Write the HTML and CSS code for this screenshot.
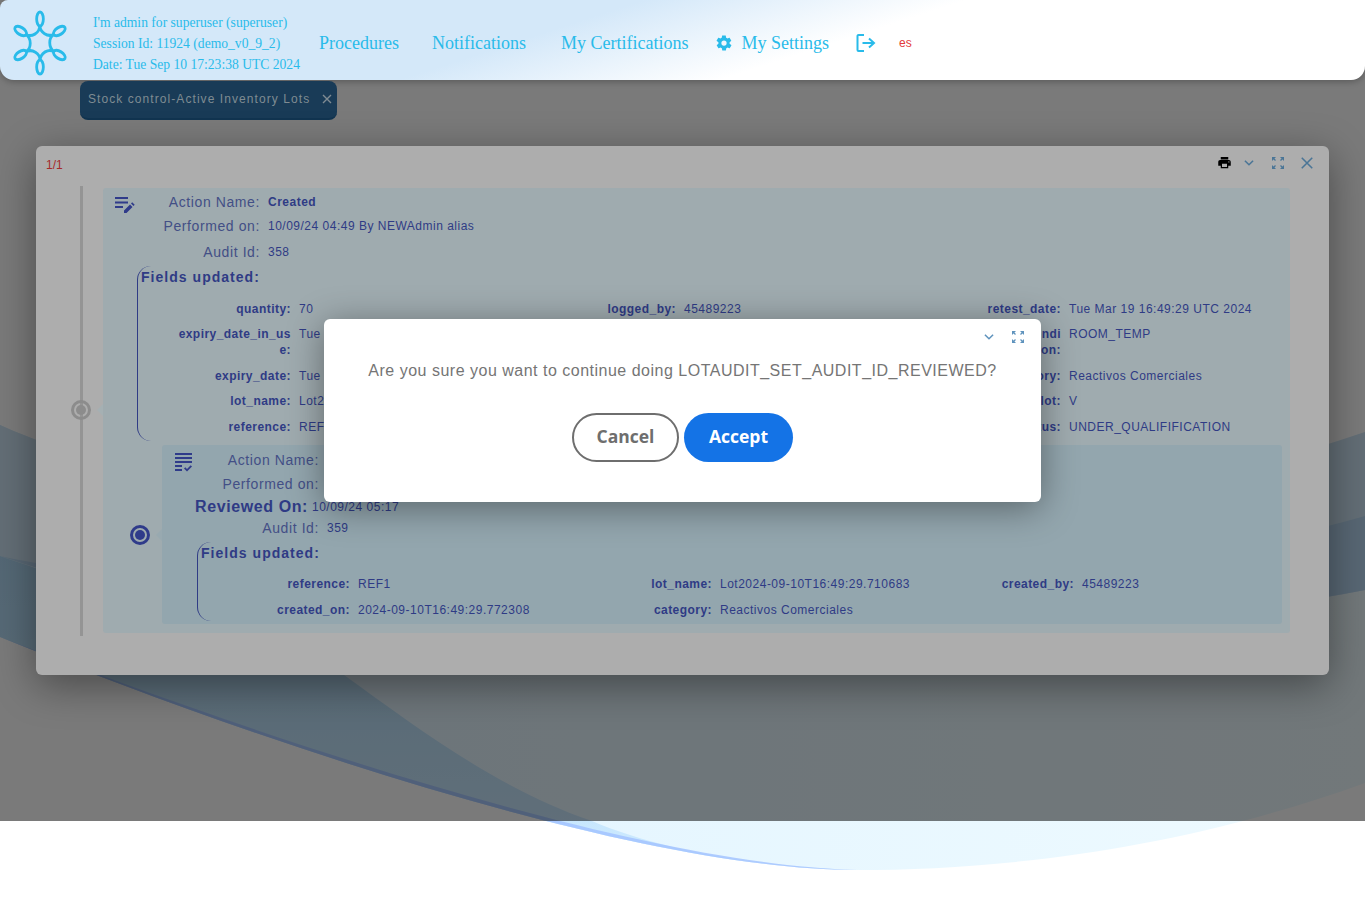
FILE: index.html
```html
<!DOCTYPE html>
<html lang="en">

<head>
    <meta charset="UTF-8">
    <meta name="viewport" content="width=device-width, initial-scale=1.0">
    <title>Stock control - Active Inventory Lots</title>
    <link rel="stylesheet" href="styles.css">
</head>

<body>
    <svg class="backdrop" viewBox="0 0 1365 901" aria-hidden="true">
        <defs>
            <linearGradient id="base" x1="0" y1="0" x2="1" y2="0">
                <stop offset="0" stop-color="#dff3ff" />
                <stop offset="1" stop-color="#eefaff" />
            </linearGradient>
            <linearGradient id="wedge" x1="0" y1="0" x2="0" y2="1">
                <stop offset="0" stop-color="#aed8f4" />
                <stop offset="1" stop-color="#cdeaff" />
            </linearGradient>
        </defs>
        <path fill="url(#base)"
            d="M0 425C300 560 1000 560 1365 432V783C1180 850 1000 870 857 870C640 870 261 743 0 637Z" />
        <path fill="#cfe6f6" d="M0 425C300 560 1000 560 1365 432V590C1000 660 300 660 0 556Z" />
        <path fill="#b8d8f2" d="M0 556C300 660 1000 660 1365 590V516C1000 620 300 620 0 556Z" />
        <path fill="url(#wedge)"
            d="M0 556C100 590 250 640 344 675C420 730 500 790 592 821C660 850 760 868 857 870C640 870 261 743 0 637Z" />
        <path fill="#a0c0ff" fill-opacity="0.8" d="M857 870C640 870 261 743 0 637C261 738 640 865 857 870Z" />
    </svg>
    <div class="scrim"></div>

    <div class="page">
        <header class="topbar">
            <svg class="logo" viewBox="-3 0 86 86" preserveAspectRatio="none" aria-hidden="true">
                <g id="petal" fill="none" stroke="#29bbea" stroke-width="3">
                    <ellipse cx="40" cy="19" rx="3.6" ry="7" />
                    <path d="M40 26C40 32 48 38 55.6 34" />
                </g>
                <use href="#petal" transform="rotate(60 40 43)" />
                <use href="#petal" transform="rotate(120 40 43)" />
                <use href="#petal" transform="rotate(180 40 43)" />
                <use href="#petal" transform="rotate(240 40 43)" />
                <use href="#petal" transform="rotate(300 40 43)" />
            </svg>
            <div class="session">
                <div>I'm admin for superuser (superuser)</div>
                <div>Session Id: 11924 (demo_v0_9_2)</div>
                <div>Date: Tue Sep 10 17:23:38 UTC 2024</div>
            </div>
            <nav class="nav">
                <a class="nav-procedures">Procedures</a>
                <a class="nav-notifications">Notifications</a>
                <a class="nav-certifications">My Certifications</a>
                <a class="nav-settings">
                    <svg viewBox="0 0 24 24" class="gear" aria-hidden="true">
                        <path fill="#29bbea"
                            d="M19.4 13c.1-.3.1-.7.1-1s0-.7-.1-1l2.100-1.600c.2-.2.2-.4.1-.6l-2-3.500c-.1-.2-.4-.3-.6-.2l-2.500 1c-.5-.4-1.100-.7-1.700-1l-.4-2.700c0-.2-.2-.4-.5-.4h-4c-.2 0-.5.2-.5.4l-.4 2.700c-.6.2-1.100.6-1.700 1l-2.500-1c-.2-.1-.5 0-.6.2l-2 3.500c-.1.2-.1.5.1.6L4.600 11c0 .3-.1.7-.1 1s0 .7.1 1l-2.100 1.600c-.2.2-.2.4-.1.6l2 3.500c.1.2.4.3.6.2l2.500-1c.5.4 1.100.7 1.700 1l.4 2.700c0 .2.2.4.5.4h4c.2 0 .5-.2.5-.4l.4-2.700c.6-.2 1.100-.6 1.700-1l2.500 1c.2.1.5 0 .6-.2l2-3.500c.1-.2.1-.5-.1-.6L19.400 13zM12 15.500a3.500 3.500 0 1 1 0-7 3.500 3.500 0 0 1 0 7z" />
                    </svg>
                    My Settings
                </a>
                <svg class="logout" viewBox="0 0 20 20" aria-hidden="true">
                    <path fill="none" stroke="#29bbea" stroke-width="2"
                        d="M8 2H2.500a1 1 0 0 0-1 1v14a1 1 0 0 0 1 1H8M6.500 10H18M13 5.500l5 4.500-5 4.500" />
                </svg>
                <span class="lang">es</span>
            </nav>
        </header>

        <div class="tab">
            <span>Stock control-Active Inventory Lots</span>
            <svg viewBox="0 0 10 10" class="tab-close" aria-hidden="true">
                <path d="M1 1l8 8M9 1L1 9" />
            </svg>
        </div>

        <section class="card">
            <div class="card-head">
                <span class="pager">1/1</span>
                <div class="card-tools">
                    <svg class="tool tool-print" viewBox="0 0 24 24" aria-hidden="true">
                        <path fill="#000"
                            d="M19 8H5c-1.700 0-3 1.300-3 3v6h4v4h12v-4h4v-6c0-1.700-1.300-3-3-3zm-3 11H8v-5h8v5zm3-7c-.6 0-1-.4-1-1s.4-1 1-1 1 .4 1 1-.4 1-1 1zM18 3H6v4h12V3z" />
                    </svg>
                    <svg class="tool tool-line" viewBox="0 0 12 12" aria-hidden="true">
                        <path d="M2.500 4l3.500 3.500 3.500-3.500" />
                    </svg>
                    <svg class="tool tool-line" viewBox="0 0 14 14" aria-hidden="true">
                        <path class="arrows" d="M1.500 1.500l3 3M12.500 1.500l-3 3M1.500 12.500l3-3M12.500 12.500l-3-3" />
                        <path class="arrow-heads" d="M1 1h4L1 5zM13 1H9l4 4zM1 13h4l-4-4zM13 13H9l4-4z" />
                    </svg>
                    <svg class="tool tool-line" viewBox="0 0 12 12" aria-hidden="true">
                        <path d="M1.500 1.500l9 9M10.500 1.500l-9 9" />
                    </svg>
                </div>
            </div>

            <div class="timeline">
                <span class="dot dot-first"></span>
                <article class="event event-outer">
                    <div class="event-head">
                        <svg class="event-icon" viewBox="0 0 20 18" aria-hidden="true">
                            <path d="M0 1h13v2H0zM0 5.500h13v2H0zM0 10h8v2H0z" />
                            <path d="M9 14.500l6-6 2.500 2.500-6 6H9zM16 7.500l1.200-1.200 2.500 2.500-1.200 1.200z" />
                        </svg>
                        <div class="rows">
                            <div class="row"><span class="row-label">Action Name:</span><span
                                    class="row-value strong">Created</span></div>
                            <div class="row"><span class="row-label">Performed on:</span><span
                                    class="row-value">10/09/24 04:49 By NEWAdmin alias</span></div>
                            <div class="row row-audit"><span class="row-label">Audit Id:</span><span
                                    class="row-value">358</span></div>
                        </div>
                    </div>
                    <div class="fields">
                        <div class="fields-title">Fields updated:</div>
                        <div class="fields-grid">
                            <div class="field"><span class="field-label">quantity:</span><span class="field-value">70</span></div>
                            <div class="field"><span class="field-label">logged_by:</span><span class="field-value">45489223</span></div>
                            <div class="field"><span class="field-label">retest_date:</span><span class="field-value">Tue Mar 19 16:49:29 UTC 2024</span></div>
                            <div class="field"><span class="field-label">expiry_date_in_use:</span><span class="field-value">Tue Sep 10 16:49:29</span></div>
                            <div class="field"></div>
                            <div class="field"><span class="field-label">lab_storage_condition:</span><span class="field-value">ROOM_TEMP</span></div>
                            <div class="field"><span class="field-label">expiry_date:</span><span class="field-value">Tue Sep 10 16:49:29</span></div>
                            <div class="field"></div>
                            <div class="field"><span class="field-label">category:</span><span class="field-value">Reactivos Comerciales</span></div>
                            <div class="field"><span class="field-label">lot_name:</span><span class="field-value">Lot2024-09-10T16:49:29</span></div>
                            <div class="field"></div>
                            <div class="field"><span class="field-label">bulk_lot:</span><span class="field-value">V</span></div>
                            <div class="field"><span class="field-label">reference:</span><span class="field-value">REF1</span></div>
                            <div class="field"></div>
                            <div class="field"><span class="field-label">status:</span><span class="field-value">UNDER_QUALIFIFICATION</span></div>
                        </div>
                    </div>

                    <article class="event event-inner">
                        <span class="dot dot-second"></span>
                        <div class="event-head">
                            <svg class="event-icon" viewBox="0 0 18 20" aria-hidden="true">
                                <path d="M0 0h17v2H0zM0 4h17v2H0zM0 8h17v2H0zM0 12h7v2H0zM0 16h7v2H0z" />
                                <path d="M9 15.500l1.300-1.300 1.700 1.700 3.700-3.700 1.300 1.300-5 5z" />
                            </svg>
                            <div class="rows">
                                <div class="row"><span class="row-label">Action Name:</span><span
                                        class="row-value strong">Reviewed</span></div>
                                <div class="row"><span class="row-label">Performed on:</span><span
                                        class="row-value">10/09/24 05:17 By NEWAdmin alias</span></div>
                                <div class="row row-reviewed"><span class="row-label">Reviewed On:</span><span
                                        class="row-value">10/09/24 05:17</span></div>
                                <div class="row row-audit-2"><span class="row-label">Audit Id:</span><span
                                        class="row-value">359</span></div>
                            </div>
                        </div>
                        <div class="fields fields-inner">
                            <div class="fields-title">Fields updated:</div>
                            <div class="fields-grid">
                                <div class="field"><span class="field-label">reference:</span><span class="field-value">REF1</span></div>
                                <div class="field"><span class="field-label">lot_name:</span><span class="field-value">Lot2024-09-10T16:49:29.710683</span></div>
                                <div class="field"><span class="field-label">created_by:</span><span class="field-value">45489223</span></div>
                                <div class="field"><span class="field-label">created_on:</span><span class="field-value">2024-09-10T16:49:29.772308</span></div>
                                <div class="field"><span class="field-label">category:</span><span class="field-value">Reactivos Comerciales</span></div>
                            </div>
                        </div>
                    </article>
                </article>
            </div>
        </section>
    </div>

    <div class="modal">
        <div class="modal-tools">
            <svg class="tool tool-line" viewBox="0 0 12 12" aria-hidden="true">
                <path d="M2.500 4l3.500 3.500 3.500-3.500" />
            </svg>
            <svg class="tool tool-line" viewBox="0 0 14 14" aria-hidden="true">
                <path class="arrows" d="M1.500 1.500l3 3M12.500 1.500l-3 3M1.500 12.500l3-3M12.500 12.500l-3-3" />
                <path class="arrow-heads" d="M1 1h4L1 5zM13 1H9l4 4zM1 13h4l-4-4zM13 13H9l4-4z" />
            </svg>
        </div>
        <p class="modal-text">Are you sure you want to continue doing LOTAUDIT_SET_AUDIT_ID_REVIEWED?</p>
        <div class="modal-buttons">
            <button class="btn btn-cancel">Cancel</button>
            <button class="btn btn-accept">Accept</button>
        </div>
    </div>
</body>

</html>
```

FILE: styles.css
```css
body {
    margin: 0;
    position: relative;
    height: 901px;
    overflow: hidden;
    background: #fff;
    font-family: "Liberation Sans", Arial, sans-serif;
}

.backdrop {
    position: absolute;
    left: 0;
    top: 0;
    width: 1365px;
    height: 901px;
}

.scrim {
    position: absolute;
    left: 0;
    top: 0;
    width: 100%;
    height: 821px;
    background: rgba(0, 0, 0, 0.52);
}

.page {
    position: relative;
}

/* top bar */
.topbar {
    display: flex;
    align-items: center;
    box-sizing: border-box;
    height: 80px;
    padding-top: 6px;
    border-radius: 8px 0 14px 14px;
    background: linear-gradient(162deg, #d4e8f9 40%, #fff 60%);
    box-shadow: 0 2px 6px rgba(0, 0, 0, 0.25);
    color: #29bbea;
    font-family: "Liberation Serif", "Times New Roman", serif;
}

.logo {
    width: 80px;
    height: 86px;
    flex-shrink: 0;
}

.session {
    width: 225px;
    margin-left: 13px;
    font-size: 13.6px;
    line-height: 21px;
    white-space: nowrap;
}

.nav {
    display: flex;
    align-items: center;
    font-size: 18px;
}

.nav a {
    display: flex;
    align-items: center;
}

.nav-procedures {
    margin-left: 1px;
}

.nav-notifications {
    margin-left: 33px;
}

.nav-certifications {
    margin-left: 35px;
}

.nav-settings {
    margin-left: 27px;
    gap: 8px;
}

.gear {
    width: 18px;
    height: 18px;
}

.logout {
    width: 20px;
    height: 20px;
    margin-left: 27px;
}

.lang {
    margin-left: 23px;
    font-family: "Liberation Sans", Arial, sans-serif;
    font-size: 12px;
    color: #e33a3a;
}

/* tab under the bar */
.tab {
    display: flex;
    align-items: center;
    justify-content: space-between;
    box-sizing: border-box;
    width: 257px;
    height: 39px;
    margin: 1px 0 0 80px;
    padding: 0 5px 2px 8px;
    border-bottom: 2px solid #113450;
    border-radius: 8px;
    background: #193b57;
    color: #7f8b92;
    font-size: 12px;
    letter-spacing: 1.07px;
    white-space: nowrap;
}

.tab-close {
    width: 10px;
    height: 10px;
    fill: none;
    stroke: #7f8b92;
    stroke-width: 1.4;
}

/* audit card */
.card {
    box-sizing: border-box;
    width: 1293px;
    margin: 26px 0 0 36px;
    padding-bottom: 39.5px;
    border-radius: 6px;
    background: #adadad;
    box-shadow: 0 10px 40px rgba(0, 0, 0, 0.4);
    color: #2f3b85;
}

.card-head {
    display: flex;
    align-items: center;
    justify-content: space-between;
    height: 40px;
    padding: 0 15px 7px 10px;
    box-sizing: border-box;
}

.pager {
    margin-top: 4px;
    color: #a52a2a;
    font-size: 12px;
}

.card-tools,
.modal-tools {
    display: flex;
    align-items: center;
}

.tool {
    display: block;
    margin-left: 15px;
}

.tool-print {
    width: 15px;
    height: 15px;
    margin-right: -5px;
}

.tool-line {
    width: 14px;
    height: 14px;
    fill: none;
    stroke: #4a7596;
    stroke-width: 1.3;
}

.arrow-heads {
    fill: #4a7596;
    stroke: none;
}

.timeline {
    position: relative;
    margin: 0 39px 0 44px;
    padding: 2px 0 3px 20px;
    border-left: 3px solid #949494;
}

.dot {
    position: absolute;
    box-sizing: border-box;
    width: 20px;
    height: 20px;
    padding: 2px;
    border: 3px solid;
    border-radius: 50%;
    background-clip: content-box;
}

.dot-first {
    left: -12px;
    top: 214px;
    border-color: #8c8c8c;
    background-color: #8c8c8c;
}

.dot-second {
    left: -32px;
    top: 80px;
    border-color: #2f3b8a;
    background-color: #2f3b8a;
}

.event {
    position: relative;
    border-radius: 3px;
}

.event::before {
    content: "";
    position: absolute;
    left: -6px;
    border: 6px solid transparent;
    border-left: 0;
}

.event-outer {
    padding: 2px 8px 8.5px 12px;
    background: #9fabaf;
}

.event-outer::before {
    top: 216px;
    border-right: 6px solid #a5b0b3;
}

.event-inner {
    margin: 3.75px 0 0 47px;
    padding: 3px 0 3px 12px;
    background: #93a6ae;
}

.event-inner::before {
    top: 84px;
    border-right: 6px solid #98a9b0;
}

.event-head {
    display: flex;
}

.event-icon {
    flex-shrink: 0;
    width: 20px;
    height: 20px;
    margin-top: 5px;
    fill: #2f3b8a;
}

.rows {
    flex: 1;
}

.row {
    display: flex;
    align-items: center;
    height: 24px;
}

.row-label {
    flex-shrink: 0;
    width: 125px;
    text-align: right;
    font-size: 14px;
    letter-spacing: 0.6px;
    color: #434f86;
}

.row-value {
    margin-left: 8px;
    font-size: 12px;
    letter-spacing: 0.5px;
}

.strong {
    font-weight: bold;
}

.row-audit {
    margin-top: 2px;
}

.row-reviewed {
    height: 22px;
}

.row-reviewed .row-label {
    width: 114px;
    font-size: 16px;
    font-weight: bold;
    color: #2f3b85;
}

.row-reviewed .row-value {
    margin-left: 4px;
}

.row-audit-2 {
    margin-top: -2px;
}

.fields {
    margin: 2px 0 3.75px 22px;
    padding: 0 0 0 3px;
    border-left: 1px solid #2f3b85;
    border-radius: 14px;
}

.fields-inner {
    margin: 2px 0 0 23px;
}

.fields-title {
    height: 24px;
    line-height: 22px;
    font-size: 14px;
    font-weight: bold;
    letter-spacing: 1.03px;
}

.fields-grid {
    display: grid;
    grid-template-columns: 385px 385px auto;
    margin: 7.75px 0 0 36px;
}

.fields-inner .fields-grid {
    grid-template-columns: 362px 362px auto;
    margin: 4px 0 0 35px;
}

.field {
    display: flex;
    min-width: 0;
    padding: 3px 0 6.5px;
    font-size: 12px;
    line-height: 16px;
    letter-spacing: 0.5px;
}

.fields-inner .field {
    padding: 6px 0 3.5px;
}

.field-label {
    flex-shrink: 0;
    width: 114px;
    text-align: right;
    font-weight: bold;
    letter-spacing: 0.45px;
    word-break: break-all;
}

.field-value {
    margin-left: 8px;
    white-space: nowrap;
}

/* confirm dialog */
.modal {
    position: absolute;
    left: 324px;
    top: 319px;
    box-sizing: border-box;
    width: 717px;
    height: 183px;
    border-radius: 6px;
    background: #fff;
    box-shadow: 0 6px 36px rgba(0, 0, 0, 0.4);
}

.modal-tools {
    justify-content: flex-end;
    height: 36px;
    padding-right: 16px;
}

.modal-tools .tool-line {
    stroke: #5f93bd;
}

.modal-tools .arrow-heads {
    fill: #5f93bd;
}

.modal-text {
    margin: 0;
    text-align: center;
    font-size: 16px;
    line-height: 32px;
    letter-spacing: 0.5px;
    color: #757575;
}

.modal-buttons {
    display: flex;
    justify-content: center;
    gap: 5px;
    margin-top: 26px;
}

.btn {
    box-sizing: border-box;
    height: 49px;
    padding: 0 0 3px;
    border-radius: 25px;
    font-family: "Open Sans", sans-serif;
    font-size: 17.5px;
    font-weight: 700;
}

.btn-cancel {
    width: 107px;
    border: 2px solid #6e6e6e;
    background: #fff;
    color: #6e6e6e;
}

.btn-accept {
    width: 109px;
    border: 0;
    background: #1473e6;
    color: #fff;
}
```
